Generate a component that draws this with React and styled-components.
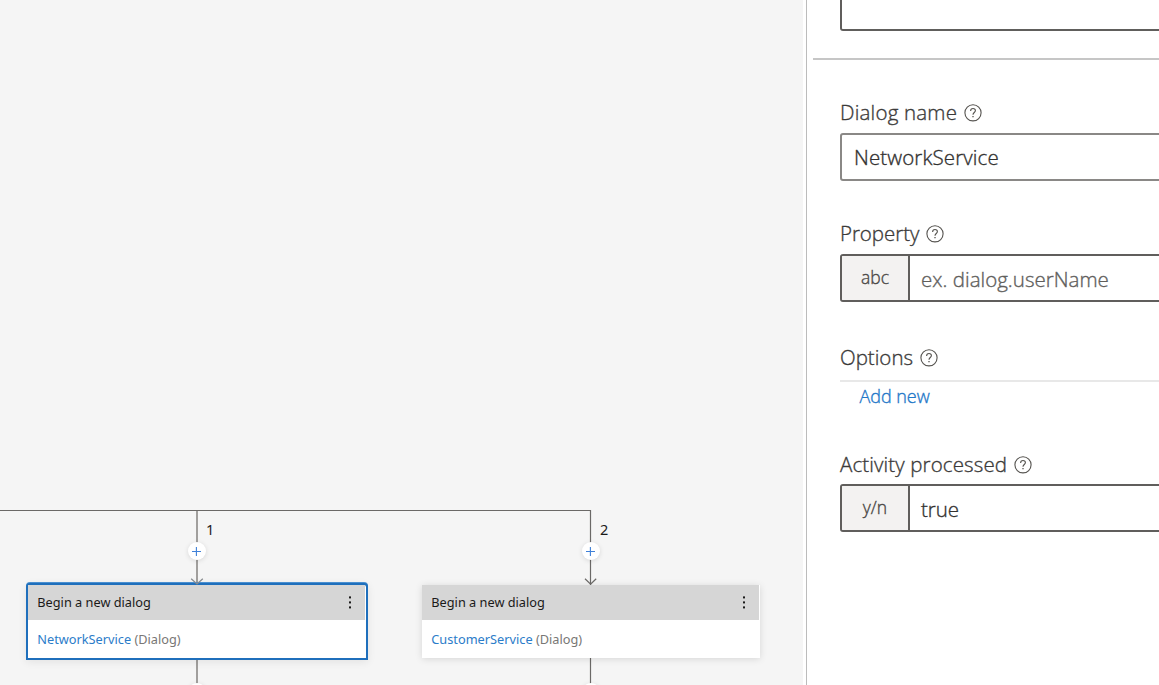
import React from "react";
import styled, { createGlobalStyle } from "styled-components";

const GlobalStyle = createGlobalStyle`
  * { box-sizing: border-box; }
  body { margin: 0; overflow: hidden; font-family: "Noto Sans", "Open Sans", sans-serif; background: #fff; }
`;

const Page = styled.div`
  display: flex;
  width: 1159px;
  height: 685px;
  overflow: hidden;
`;

const Canvas = styled.main`
  position: relative;
  flex: 0 0 803px;
  overflow: hidden;
  background: #f5f5f5;
`;

const Edges = styled.svg`
  position: absolute;
  left: 0;
  top: 0;
  fill: none;
`;

const BranchLabel = styled.span`
  position: absolute;
  left: ${(p) => p.$x}px;
  top: 519px;
  font-size: 14.5px;
  line-height: 20px;
  color: #1b1a19;
`;

const AddButton = styled.button`
  position: absolute;
  left: ${(p) => p.$x}px;
  top: ${(p) => p.$y}px;
  display: flex;
  align-items: center;
  justify-content: center;
  width: 18px;
  height: 18px;
  padding: 0;
  border: 0;
  border-radius: 50%;
  background: #fff;
  box-shadow: 0 1px 5px rgba(0, 0, 0, 0.12);
`;

const NodeCard = styled.article`
  position: absolute;
  left: ${(p) => p.$x}px;
  top: 585px;
  width: 338px;
  height: 73px;
  background: #fff;
  border-radius: ${(p) => (p.$selected ? "2px 2px 0 0" : "0")};
  box-shadow: ${(p) =>
    p.$selected
      ? "0 0 0 2px #1f6fbc, 0 -1px 0 2px #4a8fd0, 0 2px 8px 2px rgba(0,0,0,0.08)"
      : "0 1px 7px rgba(0,0,0,0.13)"};
`;

const NodeHeader = styled.header`
  display: flex;
  align-items: center;
  justify-content: space-between;
  height: 35px;
  margin-right: 1px;
  padding: 0 13px 0 9.3px;
  background: #d6d6d6;
  color: #1b1a19;
`;

const NodeTitle = styled.span`
  margin-top: -2px;
  font-size: 12.75px;
  line-height: 18px;
  white-space: nowrap;
`;

const NodeBody = styled.div`
  display: flex;
  align-items: center;
  height: 38px;
  padding: 1px 0 0 9.3px;
  color: #797775;
`;

const NodeLink = styled.span`
  color: #2b7cc9;
`;

const Panel = styled.aside`
  flex: 1;
  margin-left: 3px;
  border-left: 1px solid #bcbcbc;
  background: #fff;
  font-family: "Open Sans", "Noto Sans", sans-serif;
  font-weight: 300;
  -webkit-text-stroke-width: 0.35px;
`;

const PanelTop = styled.div`
  height: 60px;
  margin-left: 6px;
  padding-left: 27px;
  border-bottom: 2px solid #c6c6c6;
`;

const Box = styled.div`
  display: flex;
  width: 340px;
  height: ${(p) => p.$h || 48}px;
  border: 2px solid ${(p) => p.$color || "#605e5c"};
  border-top-width: ${(p) => (p.$cut ? 0 : 2)}px;
  border-radius: ${(p) => (p.$cut ? "0 0 0 3px" : "3px")};
  background: #fff;
  overflow: hidden;
`;

const Form = styled.div`
  padding-left: 33px;
`;

const Field = styled.section`
  padding-top: ${(p) => p.$gap}px;
`;

const Label = styled.div`
  display: flex;
  align-items: center;
  gap: 7.3px;
  height: 28px;
  margin-bottom: ${(p) => p.$after}px;
  color: #3b3a39;
  white-space: nowrap;
`;

const LabelText = styled.span`
  width: ${(p) => p.$w}px;
  margin-top: -2px;
  font-size: 20.5px;
  line-height: 28px;
  letter-spacing: ${(p) => p.$track}px;
`;

const Prefix = styled.span`
  flex: 0 0 68px;
  height: 44px;
  border-right: 2px solid #605e5c;
  background: #f3f2f1;
  color: #4a4846;
  font-size: 17.5px;
  line-height: 42px;
  text-align: center;
`;

const Value = styled.span`
  padding-left: ${(p) => p.$pad || 11}px;
  color: ${(p) => p.$color || "#323130"};
  font-size: 20.5px;
  line-height: ${(p) => p.$lh || 47}px;
  letter-spacing: ${(p) => p.$track}px;
  white-space: nowrap;
`;

const OptionsList = styled.div`
  border-top: 2px solid #e8e8e8;
  padding: 1px 0 0 19.5px;
  height: 46px;
`;

const AddNew = styled.a`
  display: block;
  color: #1f78c8;
  font-size: 18px;
  line-height: 26px;
  letter-spacing: -0.05px;
`;

const HelpIcon = styled.svg`
  flex: none;
  margin-top: -1px;
  fill: none;
  stroke: #55534f;
  stroke-width: 1.1;
`;

const Help = () => (
  <HelpIcon width="18" height="18" viewBox="0 0 18 18">
    <circle cx="9" cy="8.8" r="8.1" />
    <path d="M6.6 6.9C6.6 5.3 7.6 4.5 9 4.5s2.4.8 2.4 2.1c0 1.9-2.4 2-2.4 4.1" />
    <path d="M9 11.9v1.3" strokeWidth="1.3" />
  </HelpIcon>
);

const Plus = () => (
  <svg width="10" height="10" viewBox="0 0 10 10" stroke="#3f80d8" strokeWidth="1.1">
    <path d="M0 5.5h9M4.4 1v9" />
  </svg>
);

const Kebab = () => (
  <svg width="4" height="14" viewBox="0 0 4 14" fill="#1b1a19">
    <rect x="1" y="0.4" width="2" height="2" />
    <rect x="1" y="5.4" width="2" height="2" />
    <rect x="1" y="10.4" width="2" height="2" />
  </svg>
);

const DialogNode = ({ x, name, selected }) => (
  <NodeCard $x={x} $selected={selected}>
    <NodeHeader>
      <NodeTitle>Begin a new dialog</NodeTitle>
      <Kebab />
    </NodeHeader>
    <NodeBody>
      <NodeTitle>
        <NodeLink>{name}</NodeLink> (Dialog)
      </NodeTitle>
    </NodeBody>
  </NodeCard>
);

const FieldLabel = ({ text, w, track, after }) => (
  <Label $after={after}>
    <LabelText $w={w} $track={track}>{text}</LabelText>
    <Help />
  </Label>
);

export default function App() {
  return (
    <Page>
      <GlobalStyle />
      <Canvas>
        <Edges width="803" height="685">
          <path d="M0 510.5H590.5V685" stroke="#6b6967" strokeWidth="1.2" />
          <path d="M197 511V685" stroke="#a19f9d" strokeWidth="2" />
        </Edges>
        <BranchLabel $x={206}>1</BranchLabel>
        <BranchLabel $x={600}>2</BranchLabel>
        <AddButton $x={188} $y={542}><Plus /></AddButton>
        <AddButton $x={582} $y={542}><Plus /></AddButton>
        <AddButton $x={188} $y={683} />
        <AddButton $x={582} $y={683} />
        <DialogNode x={28} name="NetworkService" selected />
        <DialogNode x={422} name="CustomerService" />
        <Edges width="803" height="685">
          <path d="M191.2 578.8L197 584l5.8-5.2" stroke="#85898d" strokeWidth="1.2" />
          <path d="M585 578.8l5.6 5.4 5.6-5.4" stroke="#6b6967" strokeWidth="1.2" />
        </Edges>
      </Canvas>
      <Panel>
        <PanelTop>
          <Box $cut $h={31} />
        </PanelTop>
        <Form>
          <Field $gap={39}>
            <FieldLabel text="Dialog name" w={117} track={0.2} after={6} />
            <Box $color="#8a8886">
              <Value $pad={12} $lh={45} $track={0.12}>NetworkService</Value>
            </Box>
          </Field>
          <Field $gap={39}>
            <FieldLabel text="Property" w={78.7} track={-0.05} after={6} />
            <Box>
              <Prefix>abc</Prefix>
              <Value $color="#605e5c" $track={0.02}>ex. dialog.userName</Value>
            </Box>
          </Field>
          <Field $gap={42}>
            <FieldLabel text="Options" w={72.7} track={0} after={8} />
            <OptionsList>
              <AddNew>Add new</AddNew>
            </OptionsList>
          </Field>
          <Field $gap={25}>
            <FieldLabel text="Activity processed" w={166.5} track={0.12} after={5} />
            <Box>
              <Prefix>y/n</Prefix>
              <Value $track={-0.1}>true</Value>
            </Box>
          </Field>
        </Form>
      </Panel>
    </Page>
  );
}
